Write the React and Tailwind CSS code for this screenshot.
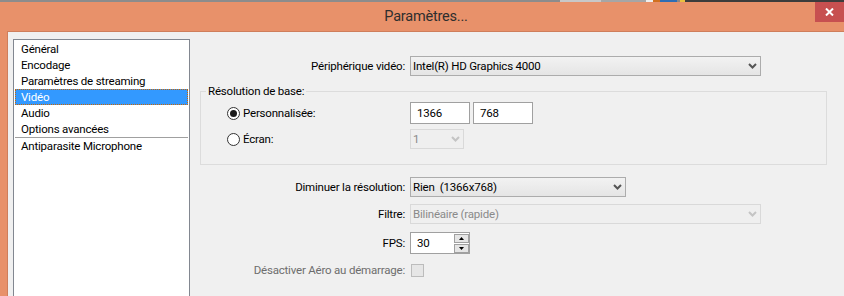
import { useState } from "react"

const items = ["Général", "Encodage", "Paramètres de streaming", "Vidéo", "Audio", "Options avancées"]

const Chevron = ({ disabled }) => (
  <svg width="9" height="6" viewBox="0 0 9 6" className="shrink-0">
    <path d="M1 1 L4.5 4.5 L8 1" fill="none" stroke={disabled ? "#C4C4C4" : "#555555"} strokeWidth="2" />
  </svg>
)

const Combo = ({ value, width, disabled }) => (
  <div
    className={`flex h-[20px] items-center justify-between border pl-[2px] pr-[3px] ${width} ${
      disabled
        ? "border-[#D9D9D9] bg-[#EFEFEF] text-[#8A8A8A]"
        : "border-[#ACACAC] bg-gradient-to-b from-[#F2F2F2] to-[#E5E5E5] text-black"
    }`}
  >
    <span className="whitespace-pre">{value}</span>
    <Chevron disabled={disabled} />
  </div>
)

const Radio = ({ checked }) => (
  <div className="flex h-[13px] w-[13px] items-center justify-center rounded-full border border-[#333333] bg-white">
    {checked && <div className="h-[7px] w-[7px] rounded-full bg-[#1A1A1A]" />}
  </div>
)

const Row = ({ label, muted, children, className }) => (
  <div className={`flex items-center gap-[5px] ${className}`}>
    <div className={`w-[215px] text-right ${muted ? "text-[#6D6D6D]" : "text-black"}`}>{label}</div>
    {children}
  </div>
)

const App = () => {
  const [selected] = useState(3)

  return (
    <div className="flex h-[296px] w-[844px] flex-col overflow-hidden bg-[#E8916A] font-[family-name:Roboto,'Liberation_Sans',sans-serif] text-[11.5px] leading-[16px] tracking-[-0.2px]">
      {/* desktop edge behind the window */}
      <div className="flex h-[2px] shrink-0">
        <div className="w-[560px] bg-[#8C8C8C]" />
        <div className="w-[41px] bg-[#C8C8C8]" />
        <div className="w-[45px] bg-[#A6A6A6]" />
        <div className="w-[7px] bg-[#EEEEEE]" />
        <div className="w-[7px] bg-[#D07020]" />
        <div className="w-[17px] bg-[#2E6DB4]" />
        <div className="w-[3px] bg-[#888888]" />
        <div className="w-[5px] bg-[#E8C040]" />
        <div className="flex-1 bg-[#3C3C3C]" />
      </div>

      {/* title bar */}
      <div className="relative flex h-[29px] shrink-0 items-center justify-center pl-[8px]">
        <span className="text-[14.5px] tracking-[-0.2px] text-[#2E2E2E]">Paramètres...</span>
        <div className="absolute right-0 top-0 flex h-[20px] w-[29px] items-center justify-center bg-[#C75050]">
          <svg width="9" height="8" viewBox="0 0 9 8">
            <path d="M1 0.5 L8 7.5 M8 0.5 L1 7.5" stroke="white" strokeWidth="2" />
          </svg>
        </div>
      </div>

      {/* body */}
      <div className="ml-[7px] flex min-h-0 flex-1 border-l border-t border-[#CF7E5B] bg-[#F0F0F0]">
        {/* list */}
        <div className="ml-[5px] mt-[7px] h-[280px] w-[177px] shrink-0 border border-[#828790] bg-white px-px pt-px">
          {items.map((item, i) => (
            <div
              key={item}
              className={`h-[16px] pl-[5px] ${
                i === selected
                  ? "border border-dotted border-[#CC6600] bg-[#3399FF] leading-[14px] text-white"
                  : "border border-transparent leading-[14px] text-black"
              }`}
            >
              {item}
            </div>
          ))}
          <div className="h-px bg-[#A0A0A0]" />
          <div className="h-[16px] pl-[6px] text-black">Antiparasite Microphone</div>
        </div>

        {/* settings */}
        <div className="flex flex-1 flex-col pt-[24px]">
          <Row label="Périphérique vidéo:">
            <Combo value="Intel(R) HD Graphics 4000" width="w-[351px]" />
          </Row>

          <fieldset className="ml-[10px] mt-[7px] w-[627px] border border-[#DCDCDC]">
            <legend className="ml-[5px] px-[2px] text-black">Résolution de base:</legend>
            <div className="flex flex-col gap-[5px] pb-[15px] pl-[26px] pt-[3px]">
              <div className="flex items-center">
                <div className="flex w-[183px] items-center gap-[3px]">
                  <Radio checked />
                  <span>Personnalisée:</span>
                </div>
                <div className="flex gap-[3px]">
                  <div className="flex h-[22px] w-[60px] items-center border border-[#A0A0A0] bg-white pl-[6px]">1366</div>
                  <div className="flex h-[22px] w-[60px] items-center border border-[#A0A0A0] bg-white pl-[6px]">768</div>
                </div>
              </div>
              <div className="flex items-center">
                <div className="flex w-[183px] items-center gap-[3px]">
                  <Radio />
                  <span>Écran:</span>
                </div>
                <Combo value="1" width="w-[54px]" disabled />
              </div>
            </div>
          </fieldset>

          <Row label="Diminuer la résolution:" className="mt-[12px]">
            <Combo value="Rien  (1366x768)" width="w-[216px]" />
          </Row>
          <Row label="Filtre:" className="mt-[7px]">
            <Combo value="Bilinéaire (rapide)" width="w-[351px]" disabled />
          </Row>
          <Row label="FPS:" className="mt-[8px]">
            <div className="flex h-[22px] w-[60px] items-center border border-[#A0A0A0] bg-white pl-[6px]">
              <span className="flex-1">30</span>
              <div className="flex flex-col gap-px">
                <div className="flex h-[9px] w-[15px] items-center justify-center border border-[#A0A0A0] bg-[#E5E5E5]">
                  <svg width="5" height="3" viewBox="0 0 5 3"><path d="M0 3 L2.5 0 L5 3 Z" fill="black" /></svg>
                </div>
                <div className="flex h-[9px] w-[15px] items-center justify-center border border-[#A0A0A0] bg-[#E5E5E5]">
                  <svg width="5" height="3" viewBox="0 0 5 3"><path d="M0 0 L5 0 L2.5 3 Z" fill="black" /></svg>
                </div>
              </div>
            </div>
          </Row>
          <Row label="Désactiver Aéro au démarrage:" muted className="mt-[8px]">
            <div className="ml-px h-[13px] w-[13px] border border-[#BCBCBC] bg-[#E6E6E6]" />
          </Row>
        </div>
      </div>
    </div>
  )
}

export default App
